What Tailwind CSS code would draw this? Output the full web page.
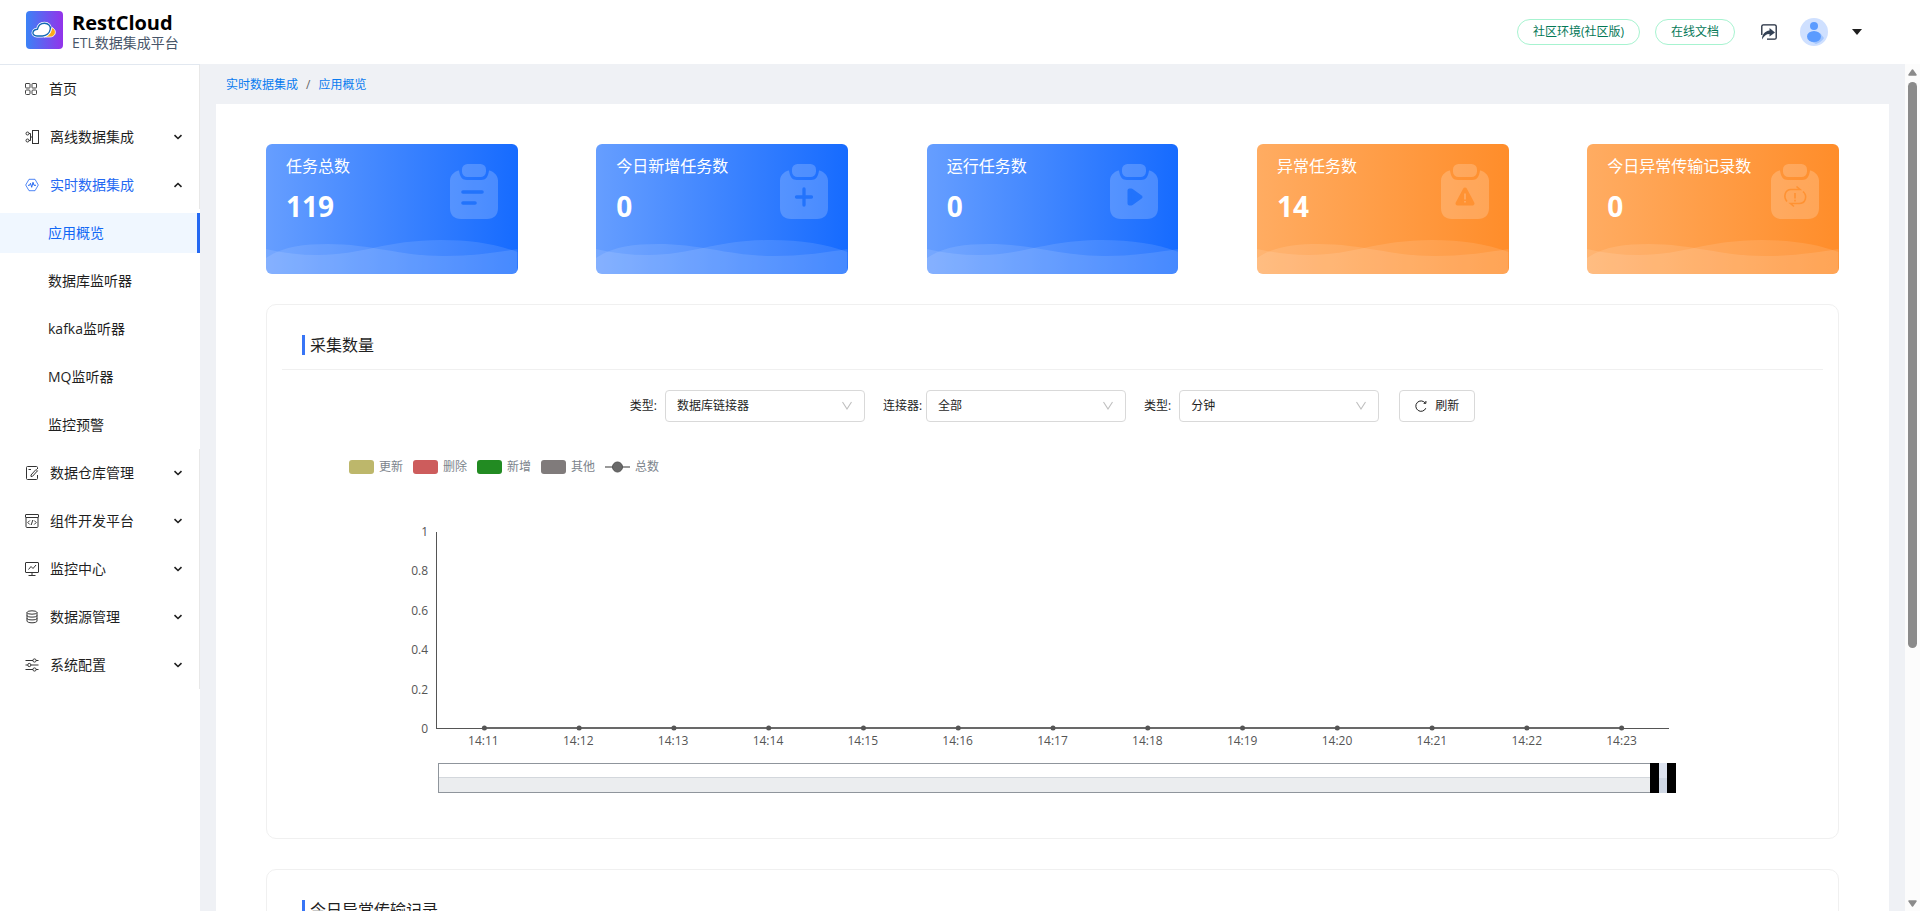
<!DOCTYPE html>
<html lang="zh-CN">
<head>
  <meta charset="UTF-8"/>
  <meta name="viewport" content="width=device-width, initial-scale=1.0"/>
  <title>RestCloud ETL数据集成平台</title>
  <script src="https://cdn.jsdelivr.net/npm/@tailwindcss/browser@4"></script>
</head>
<body class="h-screen overflow-hidden flex flex-col bg-white font-['Open_Sans','Noto_Sans_CJK_SC',sans-serif] text-sm text-[#1f1f1f]">

  <!-- Shared shapes -->
  <svg class="hidden">
    <symbol id="chevron" viewBox="0 0 10 10"><path d="M1.500 3.200 5 6.500 8.500 3.200" fill="none" stroke="currentColor" stroke-width="1.600"/></symbol>
    <symbol id="arrow" viewBox="0 0 12 12"><path d="M1.500 2l4.500 7 4.500-7" fill="none" stroke="currentColor" stroke-width="1.100"/></symbol>
    <symbol id="clipboard" viewBox="0 0 48 56">
      <path d="M9 6.500c-1-.8-9 3-9 10V44c0 7 4 11 11 11h26c7 0 11-4 11-11V16.500c0-7-8-10.800-9-10C38 13 36 16 31 16H17C12 16 10 13 9 6.500z" fill="#fff" fill-opacity=".2"/>
      <rect x="12" y="0" width="24" height="13" rx="5.500" fill="#fff" fill-opacity=".2"/>
    </symbol>
    <symbol id="waves" viewBox="0 0 252 36" preserveAspectRatio="none">
      <path d="M0 11C18 15 34 17 52 17C96 17 120 2 175 2C206 2 230 6 252 14V36H0z" fill="#fff" fill-opacity=".11"/>
      <path d="M0 20C16 9 36 6 62 6C106 6 134 18 178 18C208 18 232 14 252 11V36H0z" fill="#fff" fill-opacity=".11"/>
    </symbol>
  </svg>

  <!-- Header -->
  <header class="h-16 shrink-0 flex items-center justify-between pl-[26px] pr-[58px]">
    <div class="flex items-center gap-[9px] -mt-1">
      <svg class="w-[37px] h-[38px]" viewBox="0 0 37 38">
        <defs><linearGradient id="logo" x1="0" x2="1"><stop stop-color="#3b82f6"/><stop offset="1" stop-color="#9333ea"/></linearGradient></defs>
        <rect width="37" height="38" rx="4" fill="url(#logo)"/>
        <path d="M19 25.500c4-1 6-4 7-9 3 1.500 4 4 3 6.500-.8 2-3 3-5 3h-6z" fill="#fbab18" stroke="#fff" stroke-width=".8"/>
        <path d="M11 25c-3 0-4.500-1.800-4-3.700.5-2 2.500-3 4.500-3.100.8-4 3.800-6 7-6 3.800 0 6.300 2.700 5.800 5.800-.6 4.200-4 7-7.800 7z" fill="#fff" stroke="#fff" stroke-width="2.800"/>
        <path d="M11 25c-3 0-4.500-1.800-4-3.700.5-2 2.500-3 4.500-3.100.8-4 3.800-6 7-6 3.800 0 6.300 2.700 5.800 5.800-.6 4.200-4 7-7.800 7z" fill="#fff" stroke="#1268b3" stroke-width="1.400"/>
      </svg>
      <div class="pt-0.5">
        <h1 class="text-xl leading-6 font-bold text-black">RestCloud</h1>
        <p class="leading-4 text-[#475569]">ETL数据集成平台</p>
      </div>
    </div>
    <div class="flex items-center">
      <a href="#" class="h-[26px] px-[15px] mr-[15px] border border-[#a7f3d0] rounded-full text-xs leading-6 text-[#047857]">社区环境(社区版)</a>
      <a href="#" class="h-[26px] px-[15px] mr-[26px] border border-[#a7f3d0] rounded-full text-xs leading-6 text-[#047857]">在线文档</a>
      <button type="button" aria-label="分享" class="mr-[23px]">
        <svg class="block size-4" viewBox="0 0 16 16" fill="none">
          <path d="M.8 11V2.300C.8 1.400 1.400.8 2.300.8h11.400c.9 0 1.500.6 1.500 1.500v11.400c0 .9-.6 1.500-1.500 1.500H6" stroke="#1e293b" stroke-width="1.300"/>
          <path d="M8.500 4l5.500 4.500-5.500 4v-2.500C5 10 3 12 1 15.500 1 10.500 4 7 8.500 6.500z" fill="#334155"/>
        </svg>
      </button>
      <button type="button" aria-label="用户" class="flex items-center gap-6">
        <svg class="size-7" viewBox="0 0 28 28">
          <circle cx="14" cy="14" r="14" fill="#cfe0ff"/>
          <path d="M20 15l4 5a14 14 0 0 1-8 6l-6-3z" fill="#a3c6ff"/>
          <circle cx="14" cy="8" r="4" fill="#5b9bff"/>
          <ellipse cx="14" cy="18.500" rx="7" ry="5.500" fill="#5b9bff"/>
        </svg>
        <svg class="w-[10px] h-[6px]" viewBox="0 0 10 6"><path d="M0 0h10L5 6z" fill="#1f1f1f"/></svg>
      </button>
    </div>
  </header>

  <div class="flex-1 min-h-0 flex">
    <!-- Sidebar -->
    <nav class="w-[200px] shrink-0 border-t border-[#e2e8f0] overflow-hidden">
      <div class="border-r border-[#e8e8e8]">
        <a href="#" class="h-12 flex items-center pl-[25px] pr-4">
          <svg class="size-3 mr-3" viewBox="0 0 12 12" fill="none" stroke="#444"><rect x=".5" y=".5" width="4.500" height="4.500" rx=".5"/><rect x="7" y=".5" width="4.500" height="4.500" rx=".5"/><rect x=".5" y="7" width="4.500" height="4.500" rx="1"/><rect x="7" y="7" width="4.500" height="4.500" rx="1"/></svg>
          首页
        </a>
        <a href="#" class="h-12 flex items-center pl-[25px] pr-4">
          <svg class="size-[14px] mr-[11px]" viewBox="0 0 14 14" fill="none" stroke="#333"><rect x="7.500" y=".5" width="6" height="13"/><circle cx="2.500" cy="3.500" r="1.500"/><circle cx="2.500" cy="10.500" r="1.500"/><path d="M4 3.500h1.500v7H4M5.500 7h2"/></svg>
          离线数据集成
          <svg class="size-[10px] ml-auto"><use href="#chevron"/></svg>
        </a>
        <a href="#" class="h-12 flex items-center pl-[25px] pr-4 text-[#2468f2]">
          <svg class="size-[14px] mr-[11px]" viewBox="0 0 14 14" fill="none" stroke="currentColor"><path d="M4 1.300h6L13.300 7 10 12.700H4L.7 7z" stroke-width=".8"/><path d="M3 7.300h1.500l1-2 1.200 4 1.300-5 1 3h2"/></svg>
          实时数据集成
          <svg class="size-[10px] ml-auto rotate-180 text-[#1f1f1f]"><use href="#chevron"/></svg>
        </a>
      </div>
      <div class="flex flex-col gap-2 py-1">
        <a href="#" class="h-10 leading-10 pl-12 bg-[#f0f7ff] text-[#1268f5] border-r-3 border-[#2468f2]">应用概览</a>
        <a href="#" class="h-10 leading-10 pl-12">数据库监听器</a>
        <a href="#" class="h-10 leading-10 pl-12">kafka监听器</a>
        <a href="#" class="h-10 leading-10 pl-12">MQ监听器</a>
        <a href="#" class="h-10 leading-10 pl-12">监控预警</a>
      </div>
      <div class="border-r border-[#e8e8e8]">
        <a href="#" class="h-12 flex items-center pl-[25px] pr-4">
          <svg class="size-[14px] mr-[11px]" viewBox="0 0 14 14" fill="none" stroke="#333"><path d="M12.500 3V1.500c0-.6-.4-1-1-1H2.500c-.6 0-1 .4-1 1v11c0 .6.400 1 1 1h9c.6 0 1-.4 1-1V9"/><path d="M6 10.500V9l5-5.500 1.500 1.300-5 5.500zM3.500 3.500h2.500"/></svg>
          数据仓库管理
          <svg class="size-[10px] ml-auto"><use href="#chevron"/></svg>
        </a>
        <a href="#" class="h-12 flex items-center pl-[25px] pr-4">
          <svg class="size-[14px] mr-[11px]" viewBox="0 0 14 14" fill="none" stroke="#333"><rect x=".5" y=".5" width="13" height="3" rx=".5"/><path d="M1 3.500v9c0 .6.400 1 1 1h10c.6 0 1-.4 1-1v-9M4.800 6.500l-2 2 2 2M9.200 6.500l2 2-2 2M7.800 6l-1.600 5"/></svg>
          组件开发平台
          <svg class="size-[10px] ml-auto"><use href="#chevron"/></svg>
        </a>
        <a href="#" class="h-12 flex items-center pl-[25px] pr-4">
          <svg class="size-[14px] mr-[11px]" viewBox="0 0 14 14" fill="none" stroke="#333"><rect x=".5" y=".5" width="13" height="10" rx=".5"/><path d="M7 10.500v3M3.500 13.500h7M3.500 7.500 6 4.500l2 2 3-3.500"/></svg>
          监控中心
          <svg class="size-[10px] ml-auto"><use href="#chevron"/></svg>
        </a>
        <a href="#" class="h-12 flex items-center pl-[25px] pr-4">
          <svg class="size-[14px] mr-[11px]" viewBox="0 0 14 14" fill="none" stroke="#333"><ellipse cx="7" cy="2.500" rx="5" ry="1.700"/><path d="M2 2.500v8.500c0 1 2 1.800 5 1.800s5-.8 5-1.800V2.500M2 5.500c0 1 2 1.600 5 1.600s5-.6 5-1.600M2 8.300c0 1 2 1.600 5 1.600s5-.6 5-1.600"/></svg>
          数据源管理
          <svg class="size-[10px] ml-auto"><use href="#chevron"/></svg>
        </a>
        <a href="#" class="h-12 flex items-center pl-[25px] pr-4">
          <svg class="size-[14px] mr-[11px]" viewBox="0 0 14 14" fill="none" stroke="#333"><path d="M.5 2.500h7.500M11 2.500h2.500M.5 7h2M6 7h7.500M.5 11.500h7.500M11 11.500h2.500"/><circle cx="9.500" cy="2.500" r="1.600"/><circle cx="4.300" cy="7" r="1.600"/><circle cx="9.500" cy="11.500" r="1.600"/></svg>
          系统配置
          <svg class="size-[10px] ml-auto"><use href="#chevron"/></svg>
        </a>
      </div>
    </nav>

    <!-- Main -->
    <main class="flex-1 min-w-0 overflow-hidden bg-[#eff1f5] px-4">
      <div class="h-10 flex items-center gap-2 pl-[10px] pt-0.5 text-xs text-[#0a7cf0]">
        <a href="#">实时数据集成</a>
        <span class="text-[#666]">/</span>
        <a href="#">应用概览</a>
      </div>

      <div class="bg-white px-[50px] pt-10 pb-10">
        <!-- Stat cards -->
        <div class="flex justify-between text-white">
          <div class="relative w-[16%] h-[130px] rounded-md overflow-hidden bg-linear-to-r/srgb from-[#669eff] to-[#166bff] pl-5 pt-[10px]">
            <p class="text-base leading-6">任务总数</p>
            <p class="mt-[10px] text-[28px] leading-9 font-bold">119</p>
            <svg class="absolute right-5 top-5 w-12 h-14" viewBox="0 0 48 56"><use href="#clipboard"/><path d="M13 28h19M13 39h12" stroke="#2273fc" stroke-width="3.600" stroke-linecap="round"/></svg>
            <svg class="absolute left-0 bottom-0 w-full h-9"><use href="#waves"/></svg>
          </div>
          <div class="relative w-[16%] h-[130px] rounded-md overflow-hidden bg-linear-to-r/srgb from-[#669eff] to-[#166bff] pl-5 pt-[10px]">
            <p class="text-base leading-6">今日新增任务数</p>
            <p class="mt-[10px] text-[28px] leading-9 font-bold">0</p>
            <svg class="absolute right-5 top-5 w-12 h-14" viewBox="0 0 48 56"><use href="#clipboard"/><path d="M16.500 33h15M24 25v16" stroke="#2273fc" stroke-width="3.300" stroke-linecap="round"/></svg>
            <svg class="absolute left-0 bottom-0 w-full h-9"><use href="#waves"/></svg>
          </div>
          <div class="relative w-[16%] h-[130px] rounded-md overflow-hidden bg-linear-to-r/srgb from-[#669eff] to-[#166bff] pl-5 pt-[10px]">
            <p class="text-base leading-6">运行任务数</p>
            <p class="mt-[10px] text-[28px] leading-9 font-bold">0</p>
            <svg class="absolute right-5 top-5 w-12 h-14" viewBox="0 0 48 56"><use href="#clipboard"/><path d="M19.500 26.500v13l2 0 9-6.500-9-6.500z" fill="#2273fc" stroke="#2273fc" stroke-width="4" stroke-linejoin="round"/></svg>
            <svg class="absolute left-0 bottom-0 w-full h-9"><use href="#waves"/></svg>
          </div>
          <div class="relative w-[16%] h-[130px] rounded-md overflow-hidden bg-linear-to-r/srgb from-[#ffac62] to-[#ff8d2a] pl-5 pt-[10px]">
            <p class="text-base leading-6">异常任务数</p>
            <p class="mt-[10px] text-[28px] leading-9 font-bold">14</p>
            <svg class="absolute right-5 top-5 w-12 h-14" viewBox="0 0 48 56"><use href="#clipboard"/><path d="M24 25.500 31.500 39.500H16.500z" fill="#ff9233" stroke="#ff9233" stroke-width="4" stroke-linejoin="round"/><path d="M24 29.500v6M24 37v1.500" stroke="#ffb679" stroke-width="1.200"/></svg>
            <svg class="absolute left-0 bottom-0 w-full h-9"><use href="#waves"/></svg>
          </div>
          <div class="relative w-[16%] h-[130px] rounded-md overflow-hidden bg-linear-to-r/srgb from-[#ffac62] to-[#ff8d2a] pl-5 pt-[10px]">
            <p class="text-base leading-6">今日异常传输记录数</p>
            <p class="mt-[10px] text-[28px] leading-9 font-bold">0</p>
            <svg class="absolute right-5 top-5 w-12 h-14" viewBox="0 0 48 56"><use href="#clipboard"/><path d="M16 37.500c-4-4.500-2-12 4-12h9l-3.500-3M32 27.500c5 4.500 2.500 12-4 12h-8.500l3.500 3M24 29v5.500M24 35.800v1.700" fill="none" stroke="#ff9233" stroke-width="1.600"/></svg>
            <svg class="absolute left-0 bottom-0 w-full h-9"><use href="#waves"/></svg>
          </div>
        </div>

        <!-- Collected amount -->
        <section class="mt-[30px] border border-[#f0f0f0] rounded-[10px] p-[15px]">
          <h2 class="h-[50px] flex items-center gap-[5px] pl-5 border-b border-[#f0f0f0] text-base">
            <span class="w-[3px] h-5 bg-[#3875f6]"></span>采集数量
          </h2>

          <form class="mt-5 flex items-center justify-center text-xs">
            <label for="source" class="mr-2">类型:</label>
            <div class="relative mr-[18px]">
              <select id="source" class="block w-[200px] h-8 pl-[11px] appearance-none border border-[#d9d9d9] rounded bg-white">
                <option>数据库链接器</option>
              </select>
              <svg class="absolute right-3 top-[10px] size-3 text-[#bfbfbf] pointer-events-none"><use href="#arrow"/></svg>
            </div>
            <label for="connector" class="mr-1">连接器:</label>
            <div class="relative mr-[18px]">
              <select id="connector" class="block w-[200px] h-8 pl-[11px] appearance-none border border-[#d9d9d9] rounded bg-white">
                <option>全部</option>
              </select>
              <svg class="absolute right-3 top-[10px] size-3 text-[#bfbfbf] pointer-events-none"><use href="#arrow"/></svg>
            </div>
            <label for="unit" class="mr-2">类型:</label>
            <div class="relative mr-5">
              <select id="unit" class="block w-[200px] h-8 pl-[11px] appearance-none border border-[#d9d9d9] rounded bg-white">
                <option>分钟</option>
              </select>
              <svg class="absolute right-3 top-[10px] size-3 text-[#bfbfbf] pointer-events-none"><use href="#arrow"/></svg>
            </div>
            <button type="button" class="h-8 px-[15px] flex items-center gap-2 border border-[#d9d9d9] rounded">
              <svg class="size-3" viewBox="0 0 12 12" fill="none" stroke="#1f1f1f"><path d="M10.800 8.200A5.200 5.200 0 1 1 10.200 3"/><path d="M10.900 1v2.300H8.600"/></svg>
              刷新
            </button>
          </form>

          <!-- Legend -->
          <ul class="mt-[35px] ml-[67px] h-5 flex items-center gap-[10px] text-xs text-[#7c848c]">
            <li class="flex items-center gap-[5px]"><span class="w-[25px] h-[14px] rounded-[3px] bg-[#bdb76b]"></span>更新</li>
            <li class="flex items-center gap-[5px]"><span class="w-[25px] h-[14px] rounded-[3px] bg-[#cd5c5c]"></span>删除</li>
            <li class="flex items-center gap-[5px]"><span class="w-[25px] h-[14px] rounded-[3px] bg-[#228b22]"></span>新增</li>
            <li class="flex items-center gap-[5px]"><span class="w-[25px] h-[14px] rounded-[3px] bg-[#807b7b]"></span>其他</li>
            <li class="flex items-center gap-[5px]">
              <svg class="w-[25px] h-[14px]" viewBox="0 0 25 14"><path d="M0 7h25" stroke="#999" stroke-width="2"/><circle cx="12.500" cy="7" r="5" fill="#696969" stroke="#555"/></svg>总数
            </li>
          </ul>

          <!-- Chart -->
          <div class="mt-[55px] mr-[154px] flex text-xs leading-4 text-[#555]">
            <div class="w-[146px] -my-2 mr-2 flex flex-col justify-between text-right">
              <span>1</span><span>0.8</span><span>0.6</span><span>0.4</span><span>0.2</span><span>0</span>
            </div>
            <div class="flex-1 h-[197px] border-l border-b border-[#555] flex flex-col justify-end">
              <svg id="line" class="block w-full h-[6px] -mb-[3px] overflow-visible"></svg>
            </div>
          </div>
          <div id="ticks" class="mt-1 ml-[154px] mr-[154px] grid grid-cols-13 text-xs leading-4 text-center text-[#555]"></div>

          <!-- Zoom slider -->
          <div class="mt-[14px] mb-[30px] ml-[156px] mr-[147px] h-[30px] flex">
            <div class="flex-1 border border-r-0 border-[#8f959c] flex flex-col justify-end">
              <div class="h-[15px] border-t border-[#d3d7dc] bg-[#ebedef]"></div>
            </div>
            <div class="w-[9px] bg-black"></div>
            <div class="w-2 flex flex-col bg-[#dde3ef]"><div class="mt-auto h-[15px] bg-[#cfd7e4]"></div></div>
            <div class="w-[9px] bg-black"></div>
          </div>
        </section>

        <!-- Failed transfers -->
        <section class="mt-[30px] border border-[#f0f0f0] rounded-[10px] p-[15px]">
          <h2 class="h-[50px] flex items-center gap-[5px] pl-5 border-b border-[#f0f0f0] text-base">
            <span class="w-[3px] h-5 bg-[#3875f6]"></span>今日异常传输记录
          </h2>
        </section>
      </div>
    </main>

    <!-- Scrollbar -->
    <div class="w-[15px] shrink-0 flex flex-col items-center bg-[#fcfcfc] pt-[5px] pb-1" aria-hidden="true">
      <svg class="w-[9px] h-[7px]" viewBox="0 0 9 7"><path d="M4.500 1 8 6H1z" fill="#8b8b8b" stroke="#8b8b8b" stroke-width="1.500" stroke-linejoin="round"/></svg>
      <div class="mt-1.5 mb-auto w-[9px] h-[67.5%] rounded-full bg-[#8b8b8b]"></div>
      <svg class="w-[9px] h-[7px]" viewBox="0 0 9 7"><path d="M4.500 6 8 1H1z" fill="#8b8b8b" stroke="#8b8b8b" stroke-width="1.500" stroke-linejoin="round"/></svg>
    </div>
  </div>

  <script>
    const times = ["14:11", "14:12", "14:13", "14:14", "14:15", "14:16", "14:17", "14:18", "14:19", "14:20", "14:21", "14:22", "14:23"];
    const ticks = document.getElementById("ticks");
    const line = document.getElementById("line");

    // every total is 0, so the series runs along the axis
    const pos = (i) => ((i + 0.5) / times.length) * 100 + "%";
    let shapes = `<line x1="${pos(0)}" x2="${pos(times.length - 1)}" y1="3" y2="3" stroke="#696969" stroke-width="2"/>`;
    times.forEach((t, i) => {
      ticks.innerHTML += `<span>${t}</span>`;
      shapes += `<circle cx="${pos(i)}" cy="3" r="2.500" fill="#555"/>`;
    });
    line.innerHTML = shapes;
  </script>
</body>
</html>
